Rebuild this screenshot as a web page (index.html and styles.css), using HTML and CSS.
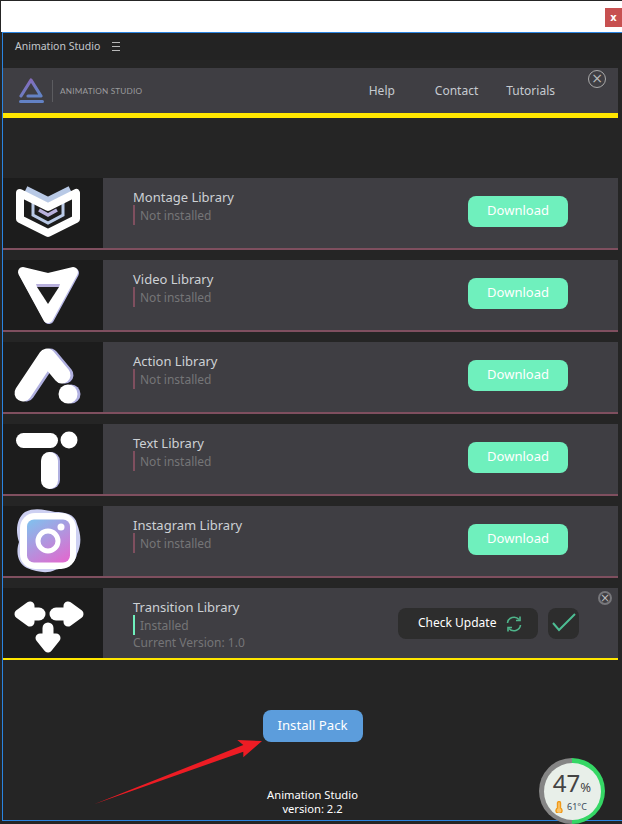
FILE: index.html
```html
<!DOCTYPE html>
<html>

<head>
    <meta charset="utf-8" />
    <title>Animation Studio</title>
    <link rel="stylesheet" href="styles.css">
</head>

<body>
    <div class="window-bar">
        <button class="window-close">x</button>
    </div>

    <div class="panel">
        <div class="panel-title">
            <span>Animation Studio</span>
            <span class="menu-icon"></span>
        </div>

        <div class="header">
            <svg class="logo" width="28" height="28" viewBox="0 0 28 28">
                <defs>
                    <linearGradient id="logoGrad" x1="0" y1="0" x2="0.6" y2="1">
                        <stop offset="0" stop-color="#9a6fd0" />
                        <stop offset="1" stop-color="#6a8fdc" />
                    </linearGradient>
                </defs>
                <path d="M3 19 L13 3 L23 19 H10" fill="none" stroke="url(#logoGrad)" stroke-width="3.2" stroke-linejoin="round" stroke-linecap="round" />
                <rect x="1" y="23" width="25" height="3" rx="1.5" fill="#6a8fdc" />
            </svg>
            <span class="logo-line"></span>
            <span class="logo-text">ANIMATION STUDIO</span>
            <nav class="nav">
                <a class="nav-help">Help</a>
                <a class="nav-contact">Contact</a>
                <a class="nav-tutorials">Tutorials</a>
            </nav>
            <span class="circle-close big">×</span>
        </div>

        <div class="rows">
            <div class="row">
                <div class="thumb">
                    <svg width="100" height="70" viewBox="0 0 100 70">
                        <path d="M23 11 L45 22 L67 11" fill="none" stroke="#b8c9e6" stroke-width="6" />
                        <path d="M30 25 V37 L45 45 L60 37 V25" fill="none" stroke="#b9c9e6" stroke-width="3" />
                        <path d="M36 32 L45 37 L54 32" fill="none" stroke="#b8b0dc" stroke-width="3.5" />
                        <path d="M17 15 L45 29 L73 15 V41 L45 55 L17 41 Z" fill="none" stroke="#fff" stroke-width="8" stroke-linejoin="round" />
                    </svg>
                </div>
                <div class="info">
                    <div class="name">Montage Library</div>
                    <div class="status">Not installed</div>
                </div>
                <button class="download">Download</button>
            </div>

            <div class="row">
                <div class="thumb">
                    <svg width="100" height="70" viewBox="0 0 100 70">
                        <path d="M21 13 L46 19 L71 13 L46 59 Z" fill="#b8b8e6" stroke="#b8b8e6" stroke-width="10" stroke-linejoin="round" />
                        <path d="M20 12 L45 18 L70 12 L45 58 Z" fill="#fff" stroke="#fff" stroke-width="10" stroke-linejoin="round" />
                        <path d="M34 27 H56 L45 44 Z" fill="#1c1c1c" />
                        <path d="M33 24 H57 L56 27 H34 Z" fill="#b8b0dc" />
                    </svg>
                </div>
                <div class="info">
                    <div class="name">Video Library</div>
                    <div class="status">Not installed</div>
                </div>
                <button class="download">Download</button>
            </div>

            <div class="row">
                <div class="thumb">
                    <svg width="100" height="70" viewBox="0 0 100 70">
                        <path d="M23 51 L47 15 L62 33" fill="none" stroke="#b0b0e0" stroke-width="17" stroke-linecap="round" stroke-linejoin="round" />
                        <circle cx="68" cy="52" r="9.5" fill="#b0b0e0" />
                        <path d="M20 51 L44 15 L59 33" fill="none" stroke="#fff" stroke-width="17" stroke-linecap="round" stroke-linejoin="round" />
                        <circle cx="65" cy="52" r="9.5" fill="#fff" />
                    </svg>
                </div>
                <div class="info">
                    <div class="name">Action Library</div>
                    <div class="status">Not installed</div>
                </div>
                <button class="download">Download</button>
            </div>

            <div class="row">
                <div class="thumb">
                    <svg width="100" height="70" viewBox="0 0 100 70">
                        <rect x="39" y="28" width="18" height="37" rx="9" fill="#b0b0e0" />
                        <rect x="13" y="9" width="42" height="15" rx="7.5" fill="#fff" />
                        <circle cx="66" cy="16" r="8.5" fill="#fff" />
                        <rect x="38" y="28" width="17" height="37" rx="8.5" fill="#fff" />
                    </svg>
                </div>
                <div class="info">
                    <div class="name">Text Library</div>
                    <div class="status">Not installed</div>
                </div>
                <button class="download">Download</button>
            </div>

            <div class="row">
                <div class="thumb">
                    <svg width="100" height="70" viewBox="0 0 100 70">
                        <defs>
                            <linearGradient id="instaGrad" x1="0.2" y1="0" x2="0.8" y2="1">
                                <stop offset="0" stop-color="#86bcec" />
                                <stop offset="1" stop-color="#de6cd0" />
                            </linearGradient>
                        </defs>
                        <path d="M22 6 C32 1 42 4 52 6 C62 6 72 8 74 18 C78 28 79 38 74 48 C72 60 60 62 52 64 C44 68 34 66 24 62 C16 58 12 48 16 36 C12 24 14 12 22 6 Z" fill="#cdd0f2" />
                        <rect x="17" y="7" width="56" height="56" rx="15" fill="#fff" />
                        <rect x="24" y="13.5" width="43" height="43" rx="7" fill="url(#instaGrad)" />
                        <circle cx="45" cy="35" r="10" fill="none" stroke="#fff" stroke-width="5" />
                        <circle cx="58" cy="21" r="3.5" fill="#fff" />
                    </svg>
                </div>
                <div class="info">
                    <div class="name">Instagram Library</div>
                    <div class="status">Not installed</div>
                </div>
                <button class="download">Download</button>
            </div>

            <div class="row row-installed">
                <div class="thumb">
                    <svg width="100" height="70" viewBox="0 0 100 70" fill="#fff" stroke="#fff" stroke-linejoin="round" stroke-linecap="round">
                        <path d="M16 26 L27 18 V34 Z" stroke-width="9" />
                        <path d="M28 26 H36" stroke-width="13" />
                        <path d="M76 26 L65 18 V34 Z" stroke-width="9" />
                        <path d="M64 26 H53" stroke-width="13" />
                        <path d="M45 60 L37 50 H53 Z" stroke-width="9" />
                        <path d="M45 40 V50" stroke-width="11" />
                    </svg>
                </div>
                <div class="info">
                    <div class="name">Transition Library</div>
                    <div class="status status-ok">Installed</div>
                    <div class="version">Current Version: 1.0</div>
                </div>
                <div class="actions">
                    <button class="check-update">
                        <span>Check Update</span>
                        <svg width="18" height="18" viewBox="0 0 18 18" fill="none" stroke="#4fb58b" stroke-width="1.6">
                            <path d="M2.5 8 A6.6 6.6 0 0 1 14 4.5" />
                            <path d="M15 1.5 V5.5 H11" />
                            <path d="M15.5 10 A6.6 6.6 0 0 1 4 13.5" />
                            <path d="M3 16.5 V12.5 H7" />
                        </svg>
                    </button>
                    <button class="check-done">
                        <svg width="31" height="31" viewBox="0 0 31 31" fill="none" stroke="#4dbd93" stroke-width="2">
                            <path d="M5 15 L11 22 L27 6" />
                        </svg>
                    </button>
                </div>
                <span class="circle-close small">×</span>
            </div>
        </div>

        <div class="footer">
            <button class="install">Install Pack</button>
            <div class="about">Animation Studio<br>version: 2.2</div>

            <svg class="arrow" width="180" height="70" viewBox="0 0 180 70">
                <path d="M1 68.3 L150.3 9 L144.3 4 L169 5 L150.3 21.3 L150.3 15.7 Z" fill="#ed1c24" />
            </svg>

            <div class="temp">
                <div class="temp-inner">
                    <div class="temp-load">47<small>%</small></div>
                    <div class="temp-deg">
                        <svg width="8" height="12" viewBox="0 0 8 12" fill="#f9c46a" stroke="#f09a1a" stroke-width="1.4">
                            <path d="M2.5 7 V2 A1.5 1.5 0 0 1 5.5 2 V7 A3 3 0 1 1 2.5 7 Z" />
                        </svg>
                        <span>61°C</span>
                    </div>
                </div>
            </div>
        </div>
    </div>
</body>

</html>
```
FILE: styles.css
```css
html,
body {
    margin: 0;
    height: 824px;
    overflow: hidden;
    background-color: #252525;
    font-family: 'Noto Sans', sans-serif;
}

button {
    border: none;
    padding: 0;
    font-family: 'Noto Sans', sans-serif;
}

.window-bar {
    margin: 1px 0 0 1px;
    height: 31px;
    background-color: white;
    position: relative;
    display: flex;
    justify-content: flex-end;
    align-items: flex-start;
}

.window-close {
    margin-top: 7px;
    width: 17px;
    height: 19px;
    background-color: #c75050;
    color: white;
    font-family: 'DejaVu Sans', sans-serif;
    font-size: 10px;
    font-weight: bold;
    line-height: 18px;
}

.panel {
    margin-left: 2px;
    height: 787px;
    border-top: 1px solid #2a84e0;
    border-left: 1px solid #2a84e0;
    border-bottom: 1px solid #2a84e0;
    background-color: #252525;
}

.panel-title {
    height: 27px;
    padding-left: 12px;
    background-color: #232323;
    color: #c4c8cc;
    font-size: 10.5px;
    line-height: 27px;
    display: flex;
    align-items: center;
}

.menu-icon {
    margin-left: 12px;
    width: 8px;
    height: 7px;
    border-top: 1px solid #b8b8b8;
    border-bottom: 1px solid #b8b8b8;
    position: relative;
}

.menu-icon::after {
    content: "";
    position: absolute;
    left: 0;
    right: 0;
    top: 3px;
    height: 1px;
    background-color: #b8b8b8;
}

.header {
    margin: 8px 4px 0 0;
    height: 45px;
    border-bottom: 5px solid #ffe600;
    background-color: #3f3e43;
    display: flex;
    align-items: center;
    position: relative;
}

.logo {
    margin-left: 15px;
    opacity: 0.85;
}

.logo-line {
    margin-left: 6px;
    width: 1px;
    height: 22px;
    background-color: #5c5c60;
}

.logo-text {
    margin-left: 7px;
    color: #9c9c9e;
    font-family: 'Lato', sans-serif;
    font-size: 8.2px;
    letter-spacing: 0.2px;
}

.nav {
    margin-left: auto;
    margin-right: 63px;
    display: flex;
    gap: 28px;
    color: #c6cad0;
    font-size: 12px;
}

.nav-contact {
    margin-left: 12px;
}

.circle-close {
    position: absolute;
    border: 1px solid #aaa;
    border-radius: 50%;
    color: #bbb;
    text-align: center;
    font-family: 'DejaVu Sans', sans-serif;
    box-sizing: border-box;
}

.circle-close.big {
    right: 12px;
    top: 2px;
    width: 18px;
    height: 18px;
    font-size: 14px;
    line-height: 15px;
}

.circle-close.small {
    right: 6px;
    top: 3px;
    width: 14px;
    height: 14px;
    font-size: 12px;
    line-height: 11px;
    border-width: 2px;
    border-color: #77777b;
}

.rows {
    margin: 60px 4px 0 0;
}

.row {
    height: 70px;
    margin-bottom: 10px;
    border-bottom: 2px solid #7f4f5f;
    background-color: #3f3e43;
    display: flex;
    align-items: flex-start;
    position: relative;
}

.row-installed {
    margin-bottom: 0;
    border-bottom-color: #ffe600;
}

.thumb {
    width: 100px;
    height: 70px;
    background-color: #1c1c1c;
    flex-shrink: 0;
}

.thumb svg {
    display: block;
}

.info {
    margin-left: 30px;
    padding-top: 11px;
}

.name {
    color: #cdd1d5;
    font-size: 13px;
    line-height: 16px;
}

.status {
    height: 20px;
    border-left: 2px solid #7f4f5f;
    padding-left: 5px;
    color: #757577;
    font-size: 12px;
    line-height: 21px;
}

.status-ok {
    border-left-color: #6ff0bd;
}

.version {
    color: #757577;
    font-size: 12px;
    line-height: 16px;
}

.download {
    margin: 18px 50px 0 auto;
    width: 100px;
    height: 31px;
    padding-bottom: 3px;
    border-radius: 8px;
    background-color: #6ff0bd;
    color: white;
    font-size: 13px;
}

.actions {
    margin: 20px 39px 0 auto;
    display: flex;
    gap: 10px;
}

.check-update {
    width: 140px;
    height: 31px;
    padding-left: 20px;
    border-radius: 8px;
    background-color: #2d2d2d;
    color: white;
    font-size: 12px;
    display: flex;
    align-items: center;
    gap: 9px;
}

.check-update span {
    margin-bottom: 2px;
}

.check-done {
    width: 31px;
    height: 31px;
    border-radius: 8px;
    background-color: #2d2d2d;
}

.check-done svg {
    display: block;
}

.footer {
    position: relative;
    display: flex;
    flex-direction: column;
    align-items: center;
    padding-top: 50px;
}

.install {
    width: 100px;
    height: 32px;
    padding-bottom: 2px;
    border-radius: 8px;
    background-color: #5c9ddc;
    color: white;
    font-size: 13.2px;
}

.about {
    margin-top: 46px;
    color: white;
    font-size: 11.2px;
    line-height: 14px;
    text-align: center;
}

.arrow {
    position: absolute;
    left: 90px;
    top: 76px;
}

.temp {
    position: absolute;
    left: 536px;
    top: 98px;
    width: 66px;
    height: 66px;
    border-radius: 50%;
    background: conic-gradient(#35d765 0 50%, #858585 50% 100%);
    display: flex;
    align-items: center;
    justify-content: center;
}

.temp-inner {
    width: 57px;
    height: 57px;
    border-radius: 50%;
    background-color: #e8efe9;
    display: flex;
    flex-direction: column;
    align-items: center;
    color: #444;
}

.temp-load {
    margin-top: 6px;
    font-size: 24px;
    line-height: 28px;
}

.temp-load small {
    font-size: 13px;
}

.temp-deg {
    margin-right: 2px;
    display: flex;
    align-items: center;
    gap: 4px;
    color: #3a4a5a;
    font-size: 9px;
    line-height: 12px;
}
```
